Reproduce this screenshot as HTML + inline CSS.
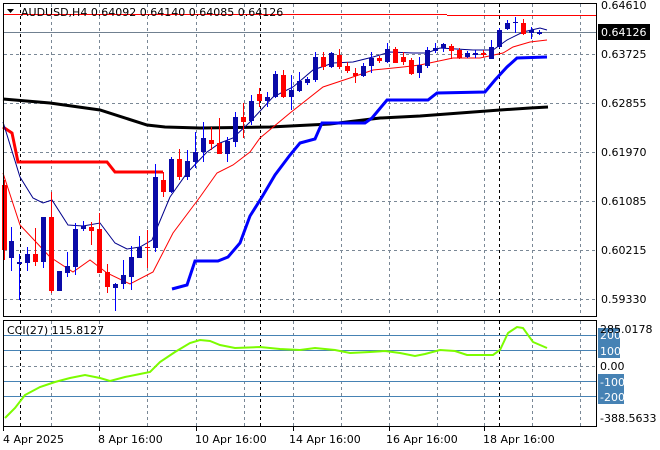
<!DOCTYPE html>
<html><head><meta charset="utf-8"><style>
html,body{margin:0;padding:0;background:#fff;}
svg{display:block;font-family:Tahoma,"DejaVu Sans","Liberation Sans",sans-serif;font-size:11px;}
</style></head><body>
<svg id="s" width="660" height="450" viewBox="0 0 660 450" xmlns="http://www.w3.org/2000/svg">
<rect width="660" height="450" fill="#fff"/>
<g id="grid" stroke="#7a8896" stroke-dasharray="3,3" stroke-width="1"></g>
<polyline fill="none" stroke="#000" stroke-width="3" points="3,99 50,103 100,110 147,125 165,127 200,128 270,127 330,124 380,118 420,116 460,113 500,110 530,108 548,107"/>
<line x1="3" y1="14.5" x2="447" y2="14.5" stroke="#f00"/>
<line x1="447" y1="15.5" x2="597" y2="15.5" stroke="#f00"/>
<line x1="3" y1="32.5" x2="597" y2="32.5" stroke="#708090"/>
<polyline fill="none" stroke="#f00" stroke-width="3" points="3,127 12,133 18,162 107,162 115,172 163,172"/>
<polyline fill="none" stroke="#00f" stroke-width="3" points="172,289 187,285 195,261 218,261 228,257 240,243 250,216 262,197 275,175 290,155 300,143 315,139 322,123 365,123 372,118 387,100 428,100 437,93 485,92 495,80 507,67 517,58 547,57"/>
<polyline fill="none" stroke="#f00" stroke-width="1" points="3,173 20,225 50,257 73,272 90,260 107,273 130,284 153,272 173,233 200,197 217,173 233,165 250,152 260,138 290,113 323,87 350,78 373,70 403,67 420,65 453,58 480,58 503,53 513,47 530,42 547,40"/>
<polyline fill="none" stroke="#00008b" stroke-width="1" points="3,122 20,177 33,198 43,203 52,200 68,225 83,226 100,223 115,243 127,249 140,247 152,240 170,197 187,173 207,152 220,143 233,138 250,122 273,97 293,87 313,70 333,63 353,62 373,57 390,52 413,53 427,53 440,48 473,50 493,50 507,40 523,32 540,28 547,30"/>
<g id="c"></g>
<rect x="3.5" y="3.5" width="593" height="313" fill="none" stroke="#000"/>
<rect x="3.5" y="320.5" width="593" height="106" fill="none" stroke="#000"/>
<g stroke="#4682b4">
<line x1="4" y1="335.5" x2="596" y2="335.5"/><line x1="4" y1="350.5" x2="596" y2="350.5"/>
<line x1="4" y1="381.5" x2="596" y2="381.5"/><line x1="4" y1="396.5" x2="596" y2="396.5"/></g>
<line x1="4" y1="366.5" x2="596" y2="366.5" stroke="#7a8896" stroke-dasharray="3,3"/>
<polyline fill="none" stroke="#7cfc00" stroke-width="2" points="5,418 15,408 25,395 40,387 55,382 70,378 85,375 100,378 110,381 125,377 140,374 150,372 160,362 175,352 190,343 200,340 210,341 220,345 235,348 260,347 280,349 300,350 315,348 335,350 350,353 370,352 385,351 400,353 415,356 425,354 440,350 455,351 467,355 493,355 500,350 508,333 517,327 523,328 533,342 547,348"/>
<path d="M7,9 L14,9 L10.5,13 Z" fill="#000"/>
<text x="21" y="16" fill="#000">AUDUSD,H4  0.64092 0.64140 0.64085 0.64126</text>
<text x="7" y="334" fill="#000">CCI(27) 115.8127</text>
<g fill="#000">
<text x="601" y="9">0.64610</text>
<text x="601" y="58">0.63725</text>
<text x="601" y="107">0.62855</text>
<text x="601" y="156">0.61970</text>
<text x="601" y="205">0.61085</text>
<text x="601" y="254">0.60215</text>
<text x="601" y="303">0.59330</text>
</g>
<rect x="598" y="24" width="52" height="16" fill="#000"/>
<text x="601" y="36" fill="#fff">0.64126</text>
<g fill="#4682b4">
<rect x="598" y="328" width="22" height="15"/><rect x="598" y="343" width="22" height="15"/>
<rect x="598" y="374" width="26" height="15"/><rect x="598" y="389" width="26" height="15"/></g>
<g fill="#fff"><text x="600" y="339">200</text><text x="600" y="355">100</text><text x="600" y="386">-100</text><text x="600" y="401">-200</text></g>
<g fill="#000"><text x="600" y="333">285.0178</text><text x="600" y="370">0.00</text><text x="600" y="422">-388.5633</text></g>
<g fill="#000">
<text x="3" y="443">4 Apr 2025</text>
<text x="98" y="443">8 Apr 16:00</text>
<text x="195" y="443">10 Apr 16:00</text>
<text x="289" y="443">14 Apr 16:00</text>
<text x="386" y="443">16 Apr 16:00</text>
<text x="483" y="443">18 Apr 16:00</text>
</g>
<g id="ticks" stroke="#000"></g>
</svg>
<script>
var NS="http://www.w3.org/2000/svg";
function el(p,t,a){var e=document.createElementNS(NS,t);for(var k in a)e.setAttribute(k,a[k]);p.appendChild(e);return e;}
var g=document.getElementById('grid');
[51,99,147,196,244,293,341,389,437,484,532,580].forEach(function(x){el(g,'line',{x1:x+.5,y1:4,x2:x+.5,y2:316});el(g,'line',{x1:x+.5,y1:321,x2:x+.5,y2:426});});
[20,260,499].forEach(function(x){el(g,'line',{x1:x+.5,y1:4,x2:x+.5,y2:316,stroke:'#000'});el(g,'line',{x1:x+.5,y1:321,x2:x+.5,y2:426,stroke:'#000'});});
[54,103,152,201,250,299].forEach(function(y){el(g,'line',{x1:4,y1:y+.5,x2:596,y2:y+.5});});
var tk=document.getElementById('ticks');
[3,99,196,293,389,484].forEach(function(x){el(tk,'line',{x1:x+.5,y1:427,x2:x+.5,y2:431});});
var C=[[4,185,250,180,260,0],[11,241,258,227,271,1],[19,262,264,254,300,1],[27,254,263,247,271,1],[35,254,262,228,266,0],[43,217,262,217,268,1],[51,217,291,192,293,0],[59,271,291,271,291,1],[67,266,273,252,277,1],[75,229,267,223,275,1],[83,226,229,221,231,1],[91,227,231,222,245,0],[99,229,273,213,273,0],[107,272,287,264,293,0],[115,284,288,283,311,1],[123,275,284,260,289,1],[131,257,277,246,290,1],[139,247,258,236,258,1],[147,247,248,230,268,0],[155,177,248,164,252,1],[163,180,192,172,197,0],[171,159,192,157,193,1],[179,159,177,149,180,0],[187,161,177,150,180,1],[195,152,162,132,168,1],[203,138,152,122,162,1],[211,140,144,127,150,0],[219,143,154,118,154,0],[227,141,154,137,162,1],[235,117,142,112,147,1],[243,117,122,103,138,0],[251,101,121,95,125,1],[259,94,101,88,107,0],[267,97,101,92,107,1],[275,74,97,71,98,1],[283,75,97,70,98,0],[291,90,97,75,110,1],[299,81,91,72,92,1],[307,79,83,77,85,1],[315,57,80,52,82,1],[323,57,67,52,70,0],[331,53,67,52,68,1],[339,55,67,49,69,0],[347,66,71,62,73,0],[355,73,76,68,83,0],[363,66,76,63,77,1],[371,58,66,52,73,1],[379,58,61,56,63,0],[387,49,62,43,63,1],[395,49,63,47,63,0],[403,57,62,52,65,0],[411,60,74,58,75,0],[419,65,73,57,78,1],[427,50,66,47,68,1],[435,48,51,43,53,1],[443,44,48,43,52,1],[451,46,51,44,59,0],[459,50,58,48,59,0],[467,53,57,51,58,1],[475,53,55,50,58,1],[483,53,55,50,57,0],[491,47,59,40,59,1],[499,30,47,28,48,1],[507,23,29,20,30,1],[515,22,23,17,33,1],[523,23,34,19,35,0],[531,30,33,27,39,1],[539,32,34,30,35,1]];
var cg=document.getElementById('c');
C.forEach(function(c){var col=c[5]?'#0000ff':'#ff0000',body=c[5]?'#0a0aa8':'#ff0000';
el(cg,'line',{x1:c[0]+.5,y1:c[3],x2:c[0]+.5,y2:c[4],stroke:col});
el(cg,'rect',{x:c[0]-2,y:c[1],width:5,height:Math.max(1,c[2]-c[1]),fill:body});});
</script>
</body></html>
